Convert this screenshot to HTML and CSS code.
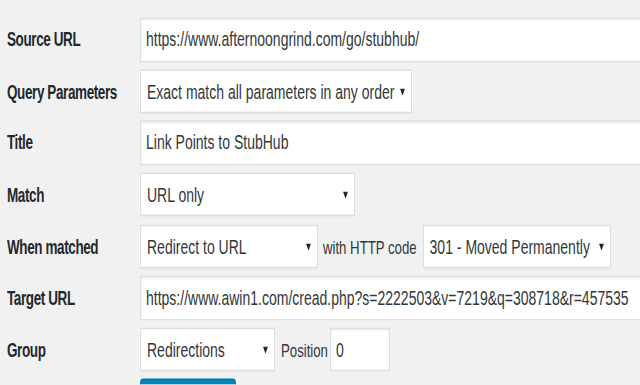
FILE: index.html
```html
<!DOCTYPE html>
<html>
<head>
<meta charset="utf-8">
<link rel="stylesheet" href="styles.css">
</head>
<body>
<div class="page">
  <div class="form">
    <div class="row">
      <div class="label">Source URL</div>
      <div class="field"><div class="input wide">https://www.afternoongrind.com/go/stubhub/</div></div>
    </div>
    <div class="row">
      <div class="label">Query Parameters</div>
      <div class="field"><div class="select w-query"><span>Exact match all parameters in any order</span><svg class="arrow" viewBox="0 0 5 5"><path d="M0 0H5L2.5 5Z"/></svg></div></div>
    </div>
    <div class="row">
      <div class="label">Title</div>
      <div class="field"><div class="input wide">Link Points to StubHub</div></div>
    </div>
    <div class="row">
      <div class="label">Match</div>
      <div class="field"><div class="select w-match"><span>URL only</span><svg class="arrow" viewBox="0 0 5 5"><path d="M0 0H5L2.5 5Z"/></svg></div></div>
    </div>
    <div class="row">
      <div class="label">When matched</div>
      <div class="field">
        <div class="select w-action"><span>Redirect to URL</span><svg class="arrow" viewBox="0 0 5 5"><path d="M0 0H5L2.5 5Z"/></svg></div>
        <span class="inline-text t-code">with HTTP code</span>
        <div class="select w-code"><span>301 - Moved Permanently</span><svg class="arrow" viewBox="0 0 5 5"><path d="M0 0H5L2.5 5Z"/></svg></div>
      </div>
    </div>
    <div class="row">
      <div class="label">Target URL</div>
      <div class="field"><div class="input wide">https://www.awin1.com/cread.php?s=2222503&amp;v=7219&amp;q=308718&amp;r=457535</div></div>
    </div>
    <div class="row">
      <div class="label">Group</div>
      <div class="field">
        <div class="select w-group"><span>Redirections</span><svg class="arrow" viewBox="0 0 5 5"><path d="M0 0H5L2.5 5Z"/></svg></div>
        <span class="inline-text t-pos">Position</span>
        <div class="input small">0</div>
      </div>
    </div>
    <div class="actions">
      <div class="field"><div class="button"></div></div>
    </div>
  </div>
</div>
</body>
</html>
```
FILE: styles.css
```css
html, body {
  margin: 0;
  padding: 0;
  background: #f1f1f1;
  overflow: hidden;
}
body {
  width: 640px;
  height: 385px;
}
.page {
  width: 640px;
  height: 265px;
  overflow: hidden;
  transform: scaleY(1.45);
  transform-origin: 0 0;
  font-family: "Liberation Sans", Arial, sans-serif;
  color: #32373c;
}
.form {
  padding: 10.2px 0 0 7px;
  display: flex;
  flex-direction: column;
}
.row {
  height: 35.52px;
  display: flex;
  align-items: center;
}
.label {
  width: 133px;
  flex: none;
  font-weight: bold;
  font-size: 13.5px;
  letter-spacing: -0.4px;
  color: #23282d;
  white-space: nowrap;
}
.field {
  display: flex;
  align-items: center;
  white-space: nowrap;
}
.input {
  box-sizing: border-box;
  height: 31px;
  border: 1px solid #ddd;
  background: #fff;
  box-shadow: inset 0 1px 2px rgba(0,0,0,0.07);
  font-size: 14px;
  line-height: 29px;
  padding: 0 5px;
  white-space: nowrap;
  overflow: hidden;
}
.input.wide {
  width: 530px;
}
.input.small {
  width: 60px;
  height: 30px;
  line-height: 28px;
  padding: 0 5px;
}
.select {
  box-sizing: border-box;
  height: 30px;
  border: 1px solid #ddd;
  background: #fff;
  box-shadow: 0 1px 0 rgba(0,0,0,0.03);
  font-size: 14px;
  line-height: 28px;
  padding: 0 0 0 6px;
  display: flex;
  align-items: center;
  justify-content: space-between;
  white-space: nowrap;
  overflow: hidden;
}
.select span {
  flex: 1;
  overflow: hidden;
}
.arrow {
  width: 5px;
  height: 5px;
  margin: 0 6px 0 4px;
  flex: none;
  fill: #23282d;
}
.w-query { width: 272px; }
.w-match { width: 215px; }
.w-action { width: 178px; }
.w-code { width: 188px; }
.w-group { width: 135px; }
.inline-text {
  font-size: 13.2px;
  color: #32373c;
}
.t-code {
  margin: 0 6px 0 5px;
}
.t-pos {
  margin: 0 2px 0 6px;
}
.actions {
  margin-top: 2.6px;
  padding-left: 133px;
}
.button {
  box-sizing: border-box;
  width: 96px;
  height: 28px;
  background: #0085ba;
  border: 1px solid #0073aa;
  border-radius: 3px;
}
```
